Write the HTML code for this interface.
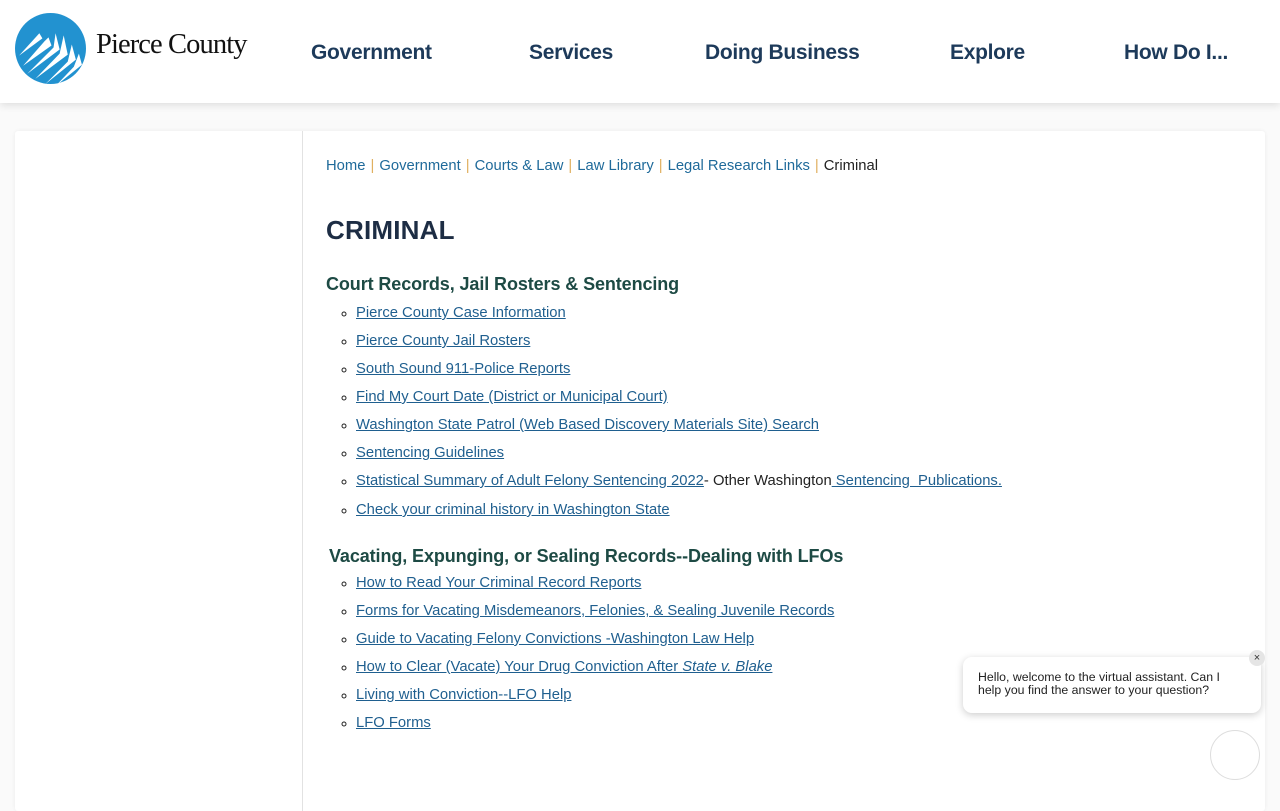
<!DOCTYPE html>
<html><head><meta charset="utf-8">
<style>
*{margin:0;padding:0;box-sizing:border-box}
body{width:1280px;height:800px;overflow:hidden;background:#fafafa;font-family:"Liberation Sans",sans-serif;position:relative}
.hdr{position:absolute;left:0;top:0;width:1280px;height:103px;background:#fff;box-shadow:0 2px 8px rgba(0,0,0,.12)}
.logo{position:absolute;left:15px;top:13px}
.brand{position:absolute;left:96px;top:29px;font-family:"Liberation Serif",serif;font-size:28.5px;color:#111;letter-spacing:-0.9px}
.nav a{position:absolute;top:41px;font-size:21px;font-weight:bold;color:#1d3a5a;text-decoration:none;letter-spacing:-0.3px}
.card{position:absolute;left:15px;top:131px;width:1250px;height:680px;background:#fff;box-shadow:0 0 4px rgba(0,0,0,.06);border-radius:3px}
.side{position:absolute;left:302px;top:131px;width:1px;height:680px;background:#e2e2e2}
.main{position:absolute;left:326px;top:158px;width:900px}
.bc{font-size:14.8px;color:#222;height:20px}
.bc a{color:#1f6a9a;text-decoration:none}
.bc span.s{color:#e0b060;margin:0 5px}
h1{font-size:26px;color:#1d2d44;margin-top:37px;letter-spacing:0.2px}
h2{font-size:18px;color:#1d4a44;margin-top:28px;letter-spacing:-0.1px}
ul{list-style:circle;margin-left:30px;margin-top:4px}
li{font-size:14.8px;line-height:28px;color:#222;letter-spacing:0}
li::marker{font-size:12px}
li a{color:#1f5f8f;text-decoration:underline}
.bubble{position:absolute;left:963px;top:657px;width:298px;height:56px;background:#fff;border-radius:9px;box-shadow:0 2px 8px rgba(0,0,0,.2);font-size:12.3px;color:#222;padding:14px 15px;line-height:13px}
.x{position:absolute;left:1249px;top:650px;width:16px;height:16px;border-radius:50%;background:#e5e5e5;font-size:11px;text-align:center;line-height:16px;color:#333}
.circ{position:absolute;left:1210px;top:730px;width:50px;height:50px;border-radius:50%;border:1px solid #ddd;background:#fff}
</style></head><body>
<div class="hdr">
<svg class="logo" width="71" height="71" viewBox="0 0 70 70"><defs><clipPath id="c"><circle cx="35" cy="35" r="35"/></clipPath></defs><circle cx="35" cy="35" r="35" fill="#2292d0"/><g clip-path="url(#c)" fill="#fff">
<polygon points="4,42 24,20 27,25"/>
<polygon points="8,52 29,28 33,24 36,32"/>
<polygon points="12,60 38,34 40,20 44,36"/>
<polygon points="20,65 44,40 48,22 52,41"/>
<polygon points="30,70 52,48 56,31 60,46"/>
<polygon points="40,72 58,53 63,40 66,51"/>
</g></svg>
<div class="brand">Pierce County</div>
<div class="nav"><a style="left:311px">Government</a><a style="left:529px">Services</a><a style="left:705px">Doing Business</a><a style="left:950px">Explore</a><a style="left:1124px">How Do I...</a></div>
</div>
<div class="card"></div><div class="side"></div>
<div class="main">
<div class="bc"><a>Home</a><span class="s">|</span><a>Government</a><span class="s">|</span><a>Courts &amp; Law</a><span class="s">|</span><a>Law Library</a><span class="s">|</span><a>Legal Research Links</a><span class="s">|</span>Criminal</div>
<h1>CRIMINAL</h1>
<h2>Court Records, Jail Rosters &amp; Sentencing</h2>
<ul>
<li><a>Pierce County Case Information</a></li>
<li><a>Pierce County Jail Rosters</a></li>
<li><a>South Sound 911-Police Reports</a></li>
<li><a>Find My Court Date (District or Municipal Court)</a></li>
<li><a>Washington State Patrol (Web Based Discovery Materials Site) Search</a></li>
<li><a>Sentencing Guidelines</a></li>
<li><a>Statistical Summary of Adult Felony Sentencing 2022</a>- Other Washington<a> Sentencing&nbsp; Publications.</a></li>
<li style="margin-top:1px"><a>Check your criminal history in Washington State</a></li>
</ul>
<h2 style="margin-top:22px;margin-left:3px">Vacating, Expunging, or Sealing Records--Dealing with LFOs</h2>
<ul style="margin-top:2px">
<li><a>How to Read Your Criminal Record Reports</a></li>
<li><a>Forms for Vacating Misdemeanors, Felonies, &amp; Sealing Juvenile Records </a></li>
<li><a>Guide to Vacating Felony Convictions -Washington Law Help</a></li>
<li><a>How to Clear (Vacate) Your Drug Conviction After <i>State v. Blake</i></a></li>
<li><a>Living with Conviction--LFO Help</a></li>
<li><a>LFO Forms</a></li>
</ul>
</div>
<div class="bubble">Hello, welcome to the virtual assistant. Can I<br>help you find the answer to your question?</div>
<div class="x">×</div>
<div class="circ"></div>
</body></html>
